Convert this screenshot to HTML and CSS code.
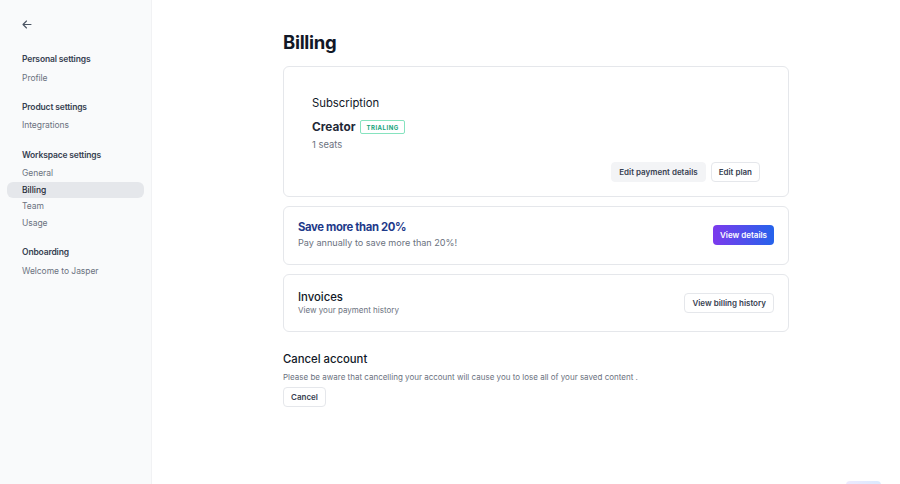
FILE: index.html
```html
<!DOCTYPE html>
<html lang="en">
<head>
<meta charset="utf-8">
<title>Billing</title>
<link rel="stylesheet" href="styles.css">
</head>
<body>
<div class="app">
  <aside class="sidebar">
    <div class="back">
      <svg width="10" height="9" viewBox="0 0 10 9" fill="none" stroke="#4b5563" stroke-width="1.1" stroke-linecap="round" stroke-linejoin="round"><path d="M9 4.5H1M4.5 1L1 4.5L4.5 8"/></svg>
    </div>
    <nav class="nav">
      <div class="section">
        <div class="section-title">Personal settings</div>
        <a class="item">Profile</a>
      </div>
      <div class="section">
        <div class="section-title">Product settings</div>
        <a class="item">Integrations</a>
      </div>
      <div class="section">
        <div class="section-title">Workspace settings</div>
        <a class="item">General</a>
        <a class="item active">Billing</a>
        <a class="item">Team</a>
        <a class="item">Usage</a>
      </div>
      <div class="section">
        <div class="section-title">Onboarding</div>
        <a class="item">Welcome to Jasper</a>
      </div>
    </nav>
  </aside>
  <main class="main">
    <div class="content">
      <h1 class="page-title">Billing</h1>
      <section class="card card-sub">
        <div class="sub-title">Subscription</div>
        <div class="plan-row">
          <span class="plan-name">Creator</span>
          <span class="badge">Trialing</span>
        </div>
        <div class="seats">1 seats</div>
        <div class="actions">
          <button class="btn btn-gray">Edit payment details</button>
          <button class="btn btn-white">Edit plan</button>
        </div>
      </section>
      <section class="card card-row card-save">
        <div class="row-text">
          <div class="save-title">Save more than 20%</div>
          <div class="save-sub">Pay annually to save more than 20%!</div>
        </div>
        <button class="btn btn-grad">View details</button>
      </section>
      <section class="card card-row card-inv">
        <div class="row-text">
          <div class="inv-title">Invoices</div>
          <div class="inv-sub">View your payment history</div>
        </div>
        <button class="btn btn-white">View billing history</button>
      </section>
      <section class="cancel">
        <h2 class="cancel-title">Cancel account</h2>
        <p class="cancel-text">Please be aware that cancelling your account will cause you to lose all of your saved content .</p>
        <button class="btn btn-white btn-block">Cancel</button>
      </section>
    </div>
  </main>
  <div class="floater"></div>
</div>
</body>
</html>
```
FILE: styles.css
```css
* { box-sizing: border-box; }
html, body { margin: 0; padding: 0; }
body {
  font-family: Inter, "Noto Sans", sans-serif;
  color: #111827;
  background: #ffffff;
  width: 900px;
  height: 484px;
  overflow: hidden;
}
.app {
  display: flex;
  height: 484px;
  position: relative;
}
.sidebar {
  width: 152px;
  flex: none;
  background: #f9fafb;
  border-right: 1px solid #f1f2f4;
  padding: 18px 7px 0 7px;
}
.back {
  height: 12px;
  padding-left: 15px;
  display: flex;
  align-items: center;
  margin-bottom: 21px;
}
.nav { display: flex; flex-direction: column; }
.section { display: flex; flex-direction: column; margin-bottom: 12.6px; }
.section-title {
  font-size: 8.5px;
  font-weight: 600;
  letter-spacing: -0.15px;
  color: #374151;
  line-height: 16px;
  padding-left: 15px;
  margin-bottom: 2.6px;
}
.item {
  font-size: 8.5px;
  letter-spacing: -0.05px;
  color: #6b7280;
  line-height: 16.6px;
  padding-left: 15px;
  border-radius: 6px;
}
.item.active {
  background: #e5e7eb;
  color: #1f2937;
  font-weight: 500;
}
.main {
  flex: 1;
  padding: 28px 0 0 131px;
}
.content { width: 506px; }
.page-title {
  font-size: 18.5px;
  font-weight: 700;
  line-height: 28px;
  margin: 0 0 10px 0;
  letter-spacing: -0.3px;
}
.card {
  border: 1px solid #e5e7eb;
  border-radius: 6px;
  background: #fff;
  margin-bottom: 9px;
}
.card-sub {
  padding: 28px 28px 13.5px 28px;
  display: flex;
  flex-direction: column;
}
.sub-title {
  font-size: 11.3px;
  line-height: 16px;
  font-weight: 400;
  color: #111827;
  margin-bottom: 8px;
}
.plan-row {
  display: flex;
  align-items: center;
  gap: 5px;
  height: 16px;
}
.plan-name {
  font-size: 11.8px;
  font-weight: 700;
  color: #1f2937;
}
.badge {
  font-size: 6px;
  font-weight: 700;
  letter-spacing: 0.5px;
  text-transform: uppercase;
  color: #16a37a;
  border: 1px solid #86e3bf;
  border-radius: 2px;
  padding: 0 5px;
  height: 14px;
  display: inline-flex;
  align-items: center;
}
.seats {
  font-size: 9.4px;
  line-height: 16px;
  color: #6b7280;
  margin-top: 2px;
  margin-bottom: 9px;
}
.actions {
  display: flex;
  justify-content: flex-end;
  gap: 5px;
}
.btn {
  font-family: inherit;
  font-size: 8px;
  font-weight: 600;
  color: #374151;
  height: 20px;
  padding: 0 7px;
  border-radius: 4px;
  border: 1px solid transparent;
  background: #fff;
  cursor: pointer;
}
.btn-block { display: block; }
.btn-gray { background: #f3f4f6; border-color: #f3f4f6; }
.btn-white { border-color: #e5e7eb; background: #fff; }
.btn-grad {
  color: #fff;
  background: linear-gradient(90deg, #7c3aed, #2563eb);
  border: none;
}
.card-row {
  display: flex;
  align-items: center;
  justify-content: space-between;
  padding: 0 14px;
}
.card-save { height: 59px; }
.card-inv { height: 58px; }
.save-title {
  font-size: 11.3px;
  font-weight: 700;
  line-height: 16px;
  color: #1e3a8a;
  letter-spacing: -0.35px;
}
.save-sub {
  font-size: 9.1px;
  line-height: 16px;
  color: #6b7280;
}
.inv-title {
  font-size: 11.3px;
  font-weight: 500;
  line-height: 16px;
  color: #111827;
}
.inv-sub {
  font-size: 8px;
  line-height: 11px;
  color: #6b7280;
}
.cancel { margin-top: 19px; }
.cancel-title {
  font-size: 11.3px;
  font-weight: 500;
  line-height: 16px;
  margin: 0 0 4px 0;
}
.cancel-text {
  font-size: 8px;
  line-height: 12px;
  color: #6b7280;
  margin: 0 0 4px 0;
}
.floater {
  position: absolute;
  left: 846px;
  top: 481px;
  width: 35px;
  height: 8px;
  border-radius: 4px;
  background: linear-gradient(90deg, #ede9fe, #dbeafe);
}
```
